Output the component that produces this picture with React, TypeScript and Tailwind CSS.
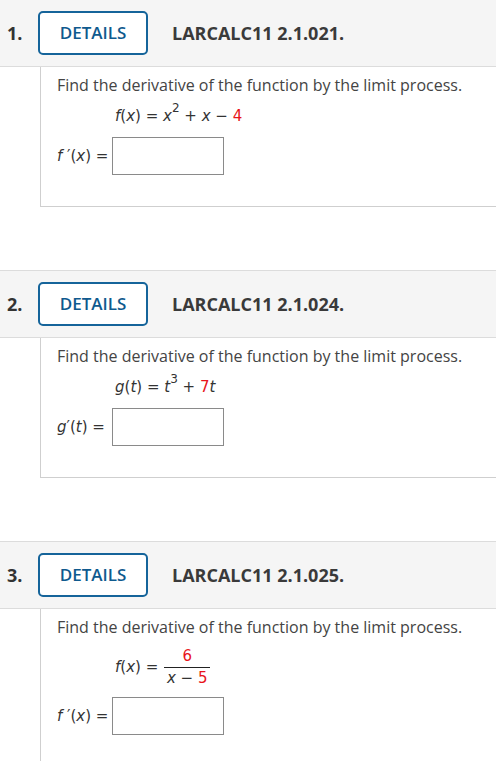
import React from "react";

const math = { fontFamily: '"DejaVu Sans", Verdana, sans-serif' };

function Header({ num, code, first }: { num: string; code: string; first?: boolean }) {
  return (
    <div
      className={
        "flex h-[67px] items-center border-b border-[#dcdcdc] bg-[#f5f5f5] " +
        (first ? "" : "h-[68px] border-t")
      }
    >
      <span className="w-[38px] pl-[7px] text-[18px] font-bold text-[#333]">{num}</span>
      <button className="flex h-[44px] w-[110px] items-center justify-center rounded-[5px] border-2 border-[#15649a] bg-white text-[17px] font-semibold text-[#0f5a8e]">
        DETAILS
      </button>
      <span className="ml-[24px] text-[18px] font-bold text-[#3a3a3a]">{code}</span>
    </div>
  );
}

function AnswerRow({ label }: { label: React.ReactNode }) {
  return (
    <div className="mt-[10px] flex items-center">
      <span className="w-[55px] text-[15px] text-[#333]" style={math}>
        {label}
      </span>
      <div className="h-[38px] w-[112px] border border-[#8a8a8a] bg-white" />
    </div>
  );
}

function Question({
  num,
  code,
  formula,
  label,
  first,
  last,
}: {
  num: string;
  code: string;
  formula: React.ReactNode;
  label: React.ReactNode;
  first?: boolean;
  last?: boolean;
}) {
  return (
    <section className={last ? "" : "mb-[63px]"}>
      <Header num={num} code={code} first={first} />
      <div
        className={
          "ml-[40px] border-l border-[#cfcfcf] pl-[16px] pt-[7px] " +
          (last ? "pb-[40px]" : "border-b pb-[31px]")
        }
      >
        <p className="text-[16px] leading-[22px] text-[#444]">
          Find the derivative of the function by the limit process.
        </p>
        <div className="mt-[9px] pl-[58px] text-[15px] leading-[22px] text-[#333]" style={math}>
          {formula}
        </div>
        <AnswerRow label={label} />
      </div>
    </section>
  );
}

export default function App() {
  return (
    <div className="w-[496px] bg-white" style={{ fontFamily: '"Open Sans", sans-serif' }}>
      <Question
        num="1."
        code="LARCALC11 2.1.021."
        first
        formula={
          <span>
            <i>f</i>(<i>x</i>) = <i>x</i>
            <sup className="-top-[0.75em] text-[12px]">2</sup> + <i>x</i> −{" "}
            <span className="text-[#e8141b]">4</span>
          </span>
        }
        label={
          <>
            <i>f</i> ′(<i>x</i>) =
          </>
        }
      />
      <Question
        num="2."
        code="LARCALC11 2.1.024."
        formula={
          <span>
            <i>g</i>(<i>t</i>) = <i>t</i>
            <sup className="-top-[0.75em] text-[12px]">3</sup> +{" "}
            <span className="text-[#e8141b]">7</span>
            <i>t</i>
          </span>
        }
        label={
          <>
            <i>g</i>′(<i>t</i>) =
          </>
        }
      />
      <Question
        num="3."
        code="LARCALC11 2.1.025."
        last
        formula={
          <span className="inline-flex items-center">
            <span>
              <i>f</i>(<i>x</i>) =
            </span>
            <span className="ml-[6px] inline-flex flex-col items-center">
              <span className="px-[4px] pb-[2px] leading-[18px] text-[#e8141b]">6</span>
              <span className="h-px w-[46px] bg-[#222]" />
              <span className="pt-[1px] leading-[18px]">
                <i>x</i> − <span className="text-[#e8141b]">5</span>
              </span>
            </span>
          </span>
        }
        label={
          <>
            <i>f</i> ′(<i>x</i>) =
          </>
        }
      />
    </div>
  );
}
